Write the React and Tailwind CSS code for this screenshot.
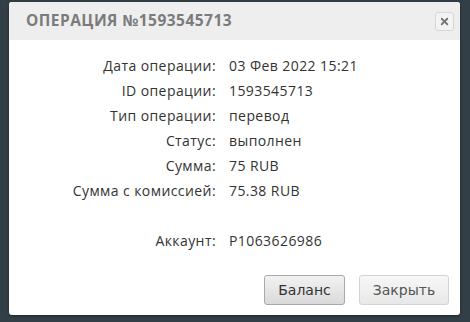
import { X } from 'lucide-react';

const rows = [
    ['Дата операции:', '03 Фев 2022 15:21'],
    ['ID операции:', '1593545713'],
    ['Тип операции:', 'перевод'],
    ['Статус:', 'выполнен'],
    ['Сумма:', '75 RUB'],
    ['Сумма с комиссией:', '75.38 RUB'],
    ['', ''],
    ['Аккаунт:', 'P1063626986'],
];

export default function App() {
    return (
        <div className="w-[470px] h-[322px] bg-[#323f46] pt-[2px] pl-[9px] overflow-hidden">
            <div className="w-[451px] h-[313px] bg-white rounded-[3px] flex flex-col overflow-hidden shadow-[0_1px_3px_rgba(0,0,0,0.4)]">
                {/* Header */}
                <div className="h-[38px] bg-[#eeeeee] flex items-center justify-between pl-[17px] pr-[6px]">
                    <h1 className="text-[15.5px] font-bold tracking-[0.03em] text-[#7b7b7b] font-['Open_Sans',sans-serif]">
                        ОПЕРАЦИЯ №1593545713
                    </h1>
                    <button className="w-[19px] h-[19px] rounded-[3px] border border-[#d6d6d6] bg-[#f3f3f3] flex items-center justify-center text-[#777]">
                        <X size={11} strokeWidth={4} />
                    </button>
                </div>

                {/* Details */}
                <div className="flex-1 pt-[13px] font-['Open_Sans',sans-serif] text-[14px] tracking-[0.03em] text-[#333]">
                    {rows.map(([label, value], i) => (
                        <div key={i} className="h-[25px] flex items-center">
                            <span className="w-[207px] text-right">{label}</span>
                            <span className="pl-[13px]">{value}</span>
                        </div>
                    ))}
                </div>

                {/* Footer */}
                <div className="flex justify-end gap-[14px] pr-[11px] pb-[10px] font-['DejaVu_Sans',sans-serif] text-[14px]">
                    <button className="w-[81px] h-[30px] rounded-[3px] border border-[#a9a9a9] bg-gradient-to-b from-[#f2f2f2] to-[#dadada] text-[#333]">
                        Баланс
                    </button>
                    <button className="w-[90px] h-[30px] rounded-[3px] border border-[#d3d3d3] bg-gradient-to-b from-[#f7f7f7] to-[#e8e8e8] text-[#555]">
                        Закрыть
                    </button>
                </div>
            </div>
        </div>
    );
}
